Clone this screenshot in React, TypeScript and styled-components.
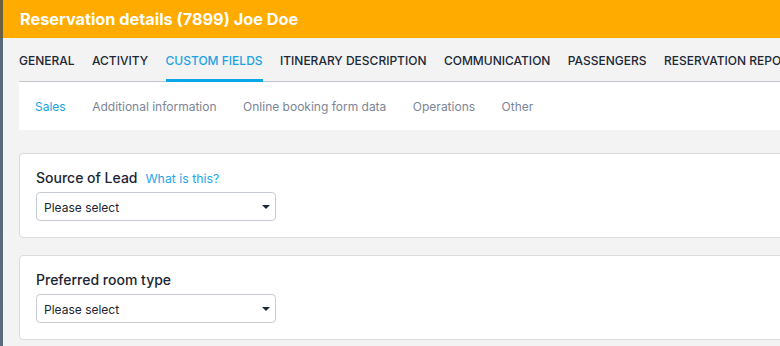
import React from 'react';
import styled, { createGlobalStyle } from 'styled-components';

const GlobalStyle = createGlobalStyle`
  html, body {
    margin: 0;
    padding: 0;
    width: 780px;
    height: 346px;
    overflow: hidden;
    font-family: Inter, 'Noto Sans', sans-serif;
  }
`;

const mainTabs = [
  'General',
  'Activity',
  'Custom fields',
  'Itinerary description',
  'Communication',
  'Passengers',
  'Reservation reports',
];

const subTabs = ['Sales', 'Additional information', 'Online booking form data', 'Operations', 'Other'];

const fields = [
  { label: 'Source of Lead', help: 'What is this?' },
  { label: 'Preferred room type' },
];

// ------------------------------------------------------------------------------------------------

const Screen = styled.div`
  display: flex;
  height: 346px;
  overflow: hidden;
`;

// dimmed page behind the drawer
const Backdrop = styled.div`
  flex: 0 0 3px;
  background: linear-gradient(to bottom, #6a6040 0, #6a6040 38px, #58697a 38px, #5a6b7b 100%);
`;

const Drawer = styled.div`
  flex: 0 0 1100px;
  display: flex;
  flex-direction: column;
  background: #f3f3f3;
`;

const Header = styled.header`
  height: 38px;
  display: flex;
  align-items: center;
  padding-left: 17px;
  background: #ffab00;
`;

const Title = styled.h1`
  margin: 0;
  font-size: 16.3px;
  font-weight: 700;
  color: #ffffff;
`;

const Body = styled.div`
  display: flex;
  flex-direction: column;
  padding: 0 0 0 16px;
`;

const TabBar = styled.nav`
  display: flex;
  gap: 17.4px;
  height: 43px;
  border-bottom: 1px solid #c3c8cf;
`;

const Tab = styled.div<{ $active?: boolean }>`
  display: flex;
  align-items: center;
  padding-top: 3px;
  font-size: 12px;
  font-weight: 500;
  text-transform: uppercase;
  white-space: nowrap;
  color: ${({ $active }) => ($active ? '#1ba2e2' : '#1b2836')};
  border-bottom: 3px solid ${({ $active }) => ($active ? '#0aa6e6' : 'transparent')};
  margin-bottom: -1px;
`;

const SubTabBar = styled.div`
  display: flex;
  gap: 26.5px;
  height: 48px;
  align-items: center;
  padding-left: 16px;
  background: #ffffff;
`;

const SubTab = styled.div<{ $active?: boolean }>`
  font-size: 12px;
  color: ${({ $active }) => ($active ? '#1ba2e2' : '#7c8596')};
  white-space: nowrap;
`;

const Fields = styled.div`
  display: flex;
  flex-direction: column;
  gap: 17px;
  padding-top: 23px;
`;

const Card = styled.section`
  background: #ffffff;
  border: 1px solid #dcdcdc;
  border-radius: 4px;
  padding: 13px 16px 16px;
`;

const LabelRow = styled.div`
  display: flex;
  align-items: baseline;
  gap: 8px;
  height: 22px;
  margin-bottom: 3px;
  padding-top: 2px;
  box-sizing: border-box;
`;

const Label = styled.span`
  font-size: 14px;
  font-weight: 500;
  color: #1b2533;
`;

const Help = styled.a`
  font-size: 12.3px;
  color: #1ea6ea;
  text-decoration: none;
`;

const Select = styled.div`
  box-sizing: border-box;
  width: 240px;
  height: 29px;
  display: flex;
  align-items: center;
  justify-content: space-between;
  padding: 1px 5px 0 7px;
  border: 1px solid #c6cbd3;
  border-radius: 4px;
  font-size: 12px;
  color: #1b2533;
`;

const Caret = styled.span`
  width: 0;
  height: 0;
  border-left: 4px solid transparent;
  border-right: 4px solid transparent;
  border-top: 4px solid #1b2836;
`;

export default function App() {
  return (
    <>
      <GlobalStyle />
      <Screen>
        <Backdrop />
        <Drawer>
          <Header>
            <Title>Reservation details (7899) Joe Doe</Title>
          </Header>
          <Body>
            <TabBar>
              {mainTabs.map((t) => (
                <Tab key={t} $active={t === 'Custom fields'}>
                  {t}
                </Tab>
              ))}
            </TabBar>
            <SubTabBar>
              {subTabs.map((t) => (
                <SubTab key={t} $active={t === 'Sales'}>
                  {t}
                </SubTab>
              ))}
            </SubTabBar>
            <Fields>
              {fields.map((f) => (
                <Card key={f.label}>
                  <LabelRow>
                    <Label>{f.label}</Label>
                    {f.help && <Help href="#">{f.help}</Help>}
                  </LabelRow>
                  <Select>
                    Please select
                    <Caret />
                  </Select>
                </Card>
              ))}
            </Fields>
          </Body>
        </Drawer>
      </Screen>
    </>
  );
}
